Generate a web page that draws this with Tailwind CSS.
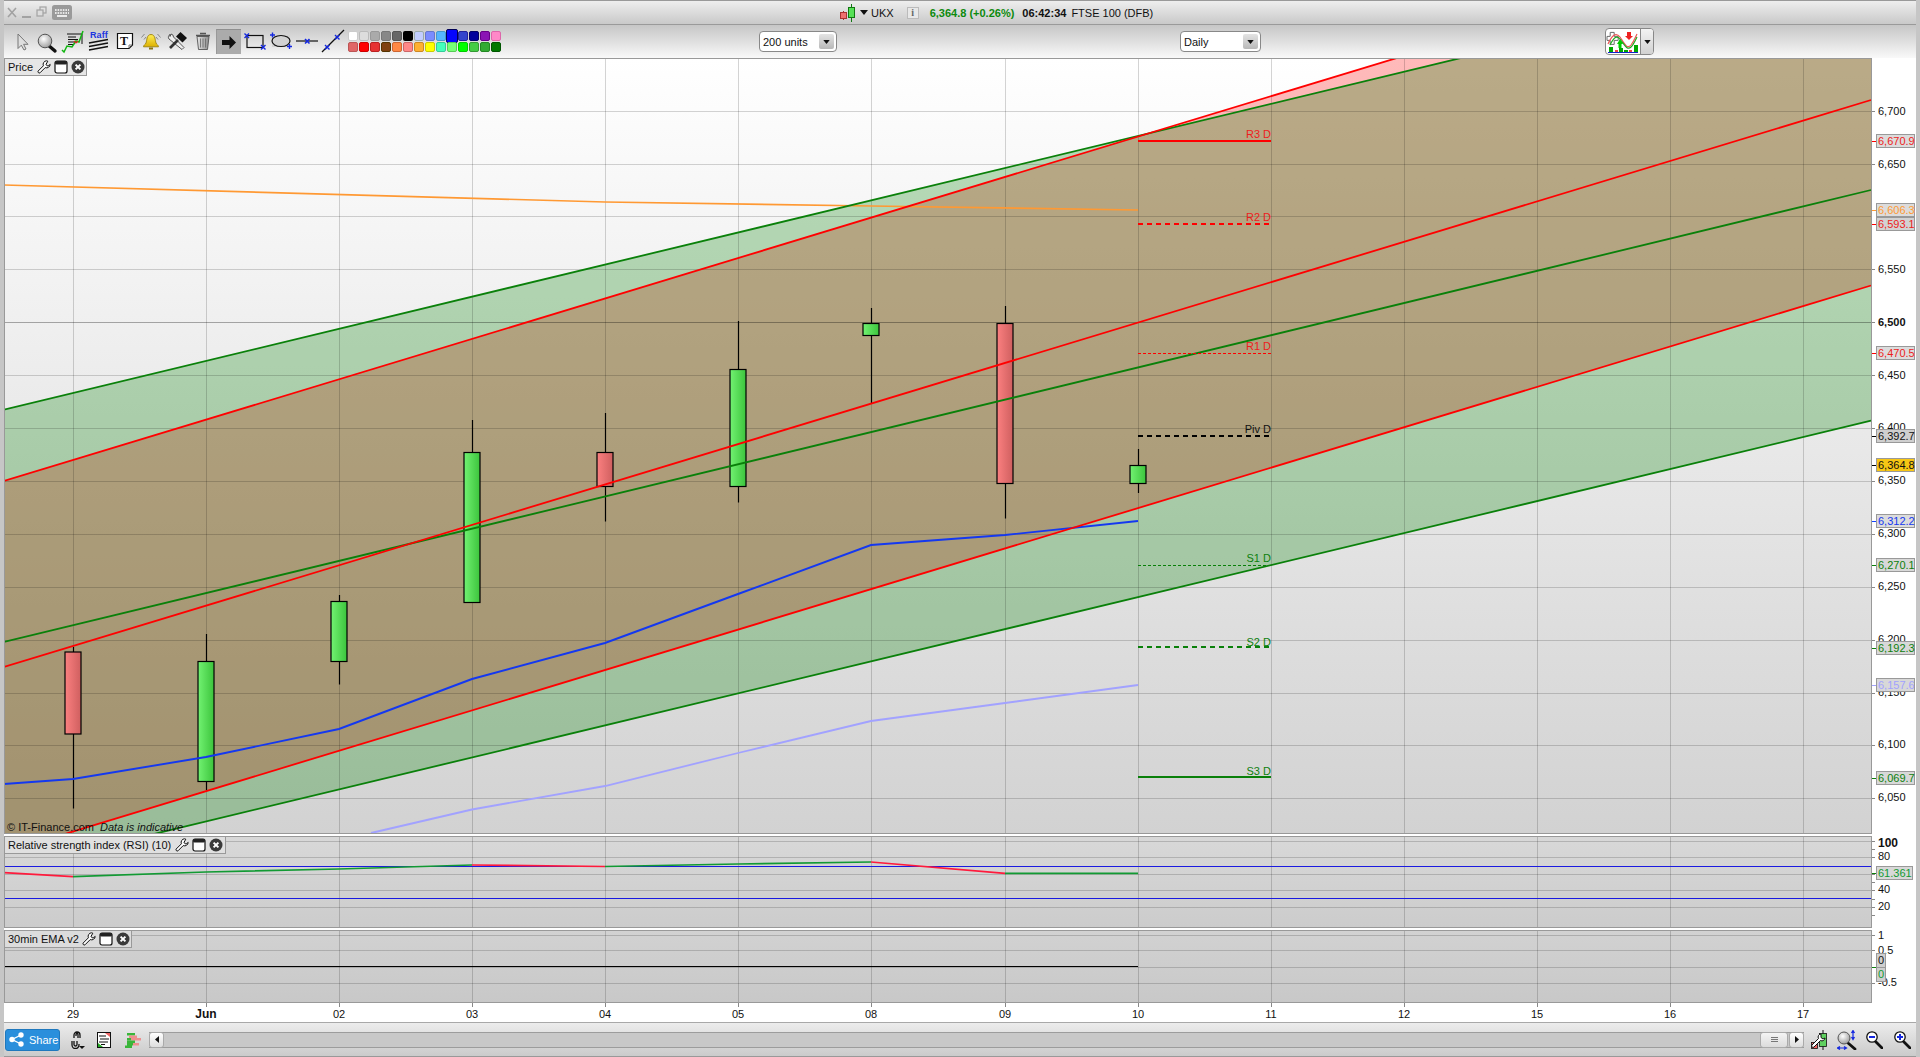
<!DOCTYPE html>
<html lang="en">
<head>
<meta charset="utf-8">
<title>UKX FTSE 100 (DFB)</title>
<script src="https://cdn.jsdelivr.net/npm/@tailwindcss/browser@4"></script>
</head>
<body class="w-[1920px] h-[1057px] overflow-hidden flex flex-col bg-white border-x-4 border-x-[#c6c6c6] text-[11px] leading-[14px] text-[#111] font-['Liberation_Sans',Arial,sans-serif]">

<svg class="absolute w-0 h-0" aria-hidden="true">
  <defs>
    <linearGradient id="gc" x1="0" x2="1" y1="0" y2="0"><stop offset="0" stop-color="#72f272"/><stop offset="1" stop-color="#3cc43c"/></linearGradient>
    <linearGradient id="rc" x1="0" x2="1" y1="0" y2="0"><stop offset="0" stop-color="#fb8080"/><stop offset="1" stop-color="#cf5f5f"/></linearGradient>
    <radialGradient id="glass" cx="0.4" cy="0.35" r="0.7"><stop offset="0" stop-color="#ffffff"/><stop offset="1" stop-color="#9a9a9a"/></radialGradient>
    <linearGradient id="bell" x1="0" x2="0" y1="0" y2="1"><stop offset="0" stop-color="#ffee55"/><stop offset="1" stop-color="#dcb000"/></linearGradient>
    <linearGradient id="trash" x1="0" x2="1" y1="0" y2="0"><stop offset="0" stop-color="#e6e6e6"/><stop offset="1" stop-color="#8a8a8a"/></linearGradient>
    <symbol id="wrench" viewBox="0 0 14 14"><path d="M9.6 .8A3.6 3.6 0 0 0 6.4 5.8L1.2 11A1.3 1.3 0 0 0 3 12.8L8.2 7.6A3.6 3.6 0 0 0 13.2 4.4L11 6.2L8.9 4.6L10.8 1.2Z" fill="#fff" stroke="#111" stroke-width="1"/></symbol>
    <symbol id="win" viewBox="0 0 14 14"><rect x="1" y="1" width="12" height="12" rx="2" fill="#fff" stroke="#111" stroke-width="1.2"/><rect x="1" y="1" width="12" height="3.5" rx="1.5" fill="#222"/></symbol>
    <symbol id="cls" viewBox="0 0 14 14"><circle cx="7" cy="7" r="6.5" fill="#3a3a3a"/><path d="M4.6 4.6L9.4 9.4M9.4 4.6L4.6 9.4" stroke="#fff" stroke-width="2"/></symbol>
    <symbol id="dd" viewBox="0 0 8 5"><path d="M0 0H8L4 5Z" fill="#111"/></symbol>
  </defs>
</svg>

<!-- title bar -->
<header class="h-[25px] shrink-0 flex items-center border-t border-t-[#999] border-b border-b-[#9a9a9a] bg-linear-to-b from-[#eeeeee] to-[#c9c9c9] whitespace-nowrap">
  <div class="w-[836px] shrink-0 flex items-center">
    <svg class="block shrink-0 ml-[3px]" width="44" height="16" viewBox="0 0 44 16" fill="none" stroke="#a2a2a2">
      <path d="M1 3L9 12M9 3L1 12" stroke-width="1.6"/>
      <path d="M15 12H24" stroke-width="2"/>
      <rect x="33" y="2" width="6" height="6" stroke-width="1.2"/>
      <rect x="30" y="5" width="6" height="6" fill="#ddd" stroke-width="1.2"/>
    </svg>
    <svg class="block shrink-0 ml-[1px]" width="20" height="15" viewBox="0 0 20 15">
      <rect width="20" height="15" rx="2.5" fill="#9a9a9a"/>
      <path d="M3 5H17M3 8H17" stroke="#fff" stroke-width="1.6" stroke-dasharray="1.6 1"/>
      <path d="M5 11H15" stroke="#fff" stroke-width="1.6"/>
    </svg>
  </div>
  <svg class="block shrink-0" width="16" height="18" viewBox="0 0 16 18">
    <path d="M3.5 7V16" stroke="#a33" stroke-width="1"/>
    <rect x=".5" y="8.5" width="6" height="6" fill="#f07070" stroke="#a33"/>
    <path d="M11.5 0V18" stroke="#171" stroke-width="1"/>
    <rect x="8.5" y="3.5" width="6" height="10" fill="#55e055" stroke="#171"/>
  </svg>
  <svg class="block shrink-0 ml-[4px]" width="8" height="5"><use href="#dd"/></svg>
  <span class="ml-[3px]">UKX</span>
  <span class="ml-[13px] w-[12px] h-[12px] flex items-center justify-center border border-[#bbb] bg-[#e8e8e8] text-[#666] font-['Liberation_Serif',serif] font-bold text-[10px]">i</span>
  <span class="ml-[11px] font-bold text-[#0d8a0d]">6,364.8 (+0.26%)</span>
  <span class="ml-[8px] font-bold">06:42:34</span>
  <span class="ml-[5px]">FTSE 100 (DFB)</span>
</header>

<!-- toolbar -->
<div class="h-[33px] shrink-0 flex items-center bg-linear-to-b from-[#c6c6c6] to-[#f9f9f9] pl-[4px]">
  <svg class="block shrink-0" width="26" height="33" viewBox="8 25 26 33"><path d="M18 34V48.5L21.3 45.2L24 50L26 49L23.6 44.3H28Z" fill="#dedede" stroke="#777"/></svg>
  <svg class="block shrink-0" width="26" height="33" viewBox="34 25 26 33"><path d="M48 45L55 51" stroke="#111" stroke-width="3.4" stroke-linecap="round"/><circle cx="45" cy="41" r="6.8" fill="url(#glass)" stroke="#555"/></svg>
  <svg class="block shrink-0" width="26" height="33" viewBox="60 25 26 33">
    <path d="M67 34H82V44" fill="none" stroke="#111"/>
    <path d="M68 37H76M68 39.5H78M68 42H75M68 44.5H74" stroke="#111" stroke-width="1.2"/>
    <path d="M62 50L64 52L67 46L72 47L76 41L79 42L83 31" fill="none" stroke="#11b511" stroke-width="1.5"/>
    <path d="M76 43l2-2M74 41l2 2" stroke="#e02222" stroke-width="1.2"/>
  </svg>
  <svg class="block shrink-0" width="26" height="33" viewBox="86 25 26 33">
    <text x="90" y="38" fill="#1b35e0" font-size="9" font-weight="700" letter-spacing=".1">Raff</text>
    <path d="M89 43L108 39.5M89 46.5L108 43M89 50L108 46.5" stroke="#111" stroke-width="1.6"/>
  </svg>
  <svg class="block shrink-0" width="26" height="33" viewBox="112 25 26 33">
    <path d="M117.500 33.500H132.500V45L129 48.500H117.500Z" fill="#fff" stroke="#111" stroke-width="1.200"/>
    <path d="M132 45L129 45V48" fill="none" stroke="#777"/>
    <text x="120" y="45" fill="#111" font-size="12" font-weight="700" font-family="Liberation Serif, serif">T</text>
  </svg>
  <svg class="block shrink-0" width="26" height="33" viewBox="138 25 26 33">
    <path d="M151 34.500C146.500 34.500 147 40.500 146 43C145.500 44.500 143.500 45 143.500 46.800H158.500C158.500 45 156.500 44.500 156 43C155 40.500 155.500 34.500 151 34.500Z" fill="url(#bell)" stroke="#9c8210" stroke-width=".9"/>
    <path d="M149 47.500H153V49.500H149Z" fill="#8a7410"/>
    <path d="M144.500 34L141.500 37.500M146 37L144 39.500M157.500 34L160.500 37.500M156 37L158 39.500" stroke="#888" stroke-width="1" fill="none"/>
  </svg>
  <svg class="block shrink-0" width="26" height="33" viewBox="164 25 26 33">
    <path d="M170 34.500A3 3 0 0 0 169 39L182 49.500L184 47.500L173.500 37A3 3 0 0 0 171 34L170 36.500Z" fill="#eee" stroke="#444" stroke-width=".9"/>
    <path d="M170 48L178 40" stroke="#333" stroke-width="2.600"/>
    <path d="M176 36.500L180.500 32L187 38L182.500 42.500Z" fill="#111"/>
  </svg>
  <svg class="block shrink-0" width="26" height="33" viewBox="190 25 26 33">
    <path d="M197 36.500H209L207.500 49.500H198.500Z" fill="url(#trash)" stroke="#555" stroke-width=".9"/>
    <path d="M196 35.500H210M200 33.500H206" stroke="#555" stroke-width="1.400"/>
    <path d="M200.500 38.500V47.500M203 38.500V47.500M205.500 38.500V47.500" stroke="#666" stroke-width=".8"/>
  </svg>
  <div class="w-[25px] h-[25px] shrink-0 flex items-center justify-center bg-[#ababab] border-t border-t-[#8f8f8f] border-l border-l-[#999]">
    <svg class="block" width="14" height="13" viewBox="0 0 14 13"><path d="M0 4H7.500V0L14 6.500L7.500 13V9H0Z" fill="#111"/></svg>
  </div>
  <svg class="block shrink-0 ml-[2px]" width="25" height="33" viewBox="243 25 25 33" fill="none">
    <rect x="247" y="35.500" width="16" height="12" stroke="#111" stroke-width="1.200"/>
    <path d="M244.500 33.500L249 38M249 33.500L244.500 38M261 45L265.500 49.500M265.500 45L261 49.500" stroke="#1428e0" stroke-width="1.400"/>
  </svg>
  <svg class="block shrink-0 ml-[1px]" width="25" height="33" viewBox="269 25 25 33" fill="none">
    <rect x="272" y="35" width="18" height="12" fill="#d2d2d2"/>
    <ellipse cx="281" cy="41" rx="9" ry="5.500" stroke="#111" stroke-width="1.200"/>
    <path d="M272.500 32.500V37.500M270 35H275M289.500 44V49M287 46.500H292" stroke="#1428e0" stroke-width="1.400"/>
  </svg>
  <svg class="block shrink-0 ml-[1px]" width="25" height="33" viewBox="295 25 25 33" fill="none">
    <path d="M296 41H318" stroke="#111" stroke-width="1.200"/>
    <path d="M305 39L309.500 43.500M309.500 39L305 43.500" stroke="#1428e0" stroke-width="1.600"/>
  </svg>
  <svg class="block shrink-0" width="26" height="33" viewBox="320 25 26 33" fill="none">
    <path d="M322 52L344 30" stroke="#111" stroke-width="1.200"/>
    <path d="M325 45L329.500 49.500M329.500 45L325 49.500M335 35L339.500 39.500M339.500 35L335 39.500" stroke="#1428e0" stroke-width="1.400"/>
  </svg>
  <div class="ml-[2px] shrink-0 grid grid-cols-[repeat(14,10px)] grid-rows-[10px_10px] gap-px">
    <span class="rounded-[2px] bg-white border border-[#ccc]"></span>
    <span class="rounded-[2px] bg-[#dddddd] border border-[#bbb]"></span>
    <span class="rounded-[2px] bg-[#aaaaaa] border border-[#999]"></span>
    <span class="rounded-[2px] bg-[#888888] border border-[#777]"></span>
    <span class="rounded-[2px] bg-[#666666] border border-[#555]"></span>
    <span class="rounded-[2px] bg-black"></span>
    <span class="rounded-[2px] bg-[#c2ceff] border border-[#9aa]"></span>
    <span class="rounded-[2px] bg-[#7a8cff] border border-[#67c]"></span>
    <span class="rounded-[2px] bg-[#55b5ff] border border-[#49c]"></span>
    <span class="rounded-[2px] bg-[#0505ff] -mx-[1px] -my-[2px] border border-[#005]"></span>
    <span class="rounded-[2px] bg-[#3344cc] border border-[#229]"></span>
    <span class="rounded-[2px] bg-[#00009c] border border-[#006]"></span>
    <span class="rounded-[2px] bg-[#8a14b4] border border-[#608]"></span>
    <span class="rounded-[2px] bg-[#ff88c8] border border-[#d6a]"></span>
    <span class="rounded-[2px] bg-[#e06666] border border-[#b55]"></span>
    <span class="rounded-[2px] bg-[#ff0000] border border-[#c00]"></span>
    <span class="rounded-[2px] bg-[#e63333] border border-[#b22]"></span>
    <span class="rounded-[2px] bg-[#804010] border border-[#530]"></span>
    <span class="rounded-[2px] bg-[#ff8844] border border-[#c63]"></span>
    <span class="rounded-[2px] bg-[#ff8888] border border-[#c66]"></span>
    <span class="rounded-[2px] bg-[#ffb030] border border-[#c82]"></span>
    <span class="rounded-[2px] bg-[#ffff00] border border-[#cc0]"></span>
    <span class="rounded-[2px] bg-[#44ffbb] border border-[#3c9]"></span>
    <span class="rounded-[2px] bg-[#77ff77] border border-[#5c5]"></span>
    <span class="rounded-[2px] bg-[#00ff00] border border-[#0c0]"></span>
    <span class="rounded-[2px] bg-[#44cc44] border border-[#393]"></span>
    <span class="rounded-[2px] bg-[#33aa33] border border-[#282]"></span>
    <span class="rounded-[2px] bg-[#007700] border border-[#050]"></span>
  </div>
  <div class="ml-[258px] w-[78px] h-[21px] shrink-0 flex items-center justify-between pl-[3px] pr-[2px] rounded-[4px] border border-[#888] bg-white">
    <span>200 units</span>
    <span class="w-[15px] h-[15px] flex items-center justify-center rounded-[2px] bg-linear-to-b from-[#e4e4e4] to-[#b8b8b8]"><svg class="block" width="7" height="4"><use href="#dd"/></svg></span>
  </div>
  <div class="ml-[343px] w-[81px] h-[21px] shrink-0 flex items-center justify-between pl-[3px] pr-[2px] rounded-[4px] border border-[#888] bg-white">
    <span>Daily</span>
    <span class="w-[15px] h-[15px] flex items-center justify-center rounded-[2px] bg-linear-to-b from-[#e4e4e4] to-[#b8b8b8]"><svg class="block" width="7" height="4"><use href="#dd"/></svg></span>
  </div>
  <div class="ml-[344px] w-[49px] h-[27px] shrink-0 flex items-center rounded-[4px] border border-[#888] bg-white overflow-hidden">
    <svg class="block shrink-0" width="34" height="25" viewBox="0 0 34 25" fill="none">
      <path d="M4 8V3H9V8H14V13H9V18H4V13H0V8Z" transform="translate(1 1) scale(.8)" fill="#fff" stroke="#666" stroke-width="1.200"/>
      <path d="M2 15C6 6 10 3 14 8C18 14 21 21 25 16C28 12 29 9 31 5" stroke="#e55" stroke-width="1.200"/>
      <path d="M4 16C8 8 11 6 14 10C18 15 21 22 25 18C28 15 30 10 31 8" stroke="#2a2" stroke-width="1.200"/>
      <path d="M11 15H17L14 10Z M12.500 15H15.500V19H12.500Z" fill="#0c0"/>
      <path d="M21 3H25V7H27L23 11L19 7H21Z" fill="#e22"/>
      <path d="M3 18H7V23H3ZM13 19H17V23H13ZM28 16H32V23H28Z" fill="#0a0"/>
      <path d="M9 21H12V23H9ZM23 21H26V23H23Z" fill="#e44"/>
      <path d="M18 21H22V23H18Z" fill="#0a0"/>
      <path d="M2 23.500H32" stroke="#12c" stroke-width="1"/>
    </svg>
    <span class="w-[13px] h-[27px] shrink-0 flex items-center justify-center border-l border-l-[#888] bg-linear-to-b from-[#f4f4f4] to-[#d0d0d0]"><svg class="block" width="7" height="4"><use href="#dd"/></svg></span>
  </div>
</div>

<!-- price panel -->
<section class="relative h-[776px] shrink-0">
  <div class="w-[1868px] h-full bg-linear-to-b from-white to-[#d2d2d2]"></div>
  <svg class="absolute inset-0" width="1912" height="776" viewBox="4 58 1912 776" fill="none">
    <polygon points="4,481 1871,-86 1871,285.5 4,852.5" fill="#ff0000" fill-opacity=".27"/>
    <polygon points="4,409.7 1871,-41 1871,420.7 4,870.1" fill="#008000" fill-opacity=".27"/>
    <g stroke="#000" stroke-opacity=".17">
      <path d="M4 111.500H1872M4 164.500H1872M4 216.500H1872M4 269.500H1872M4 375.500H1872M4 428.500H1872M4 481.500H1872M4 534.500H1872M4 587.500H1872M4 640.500H1872M4 693.500H1872M4 745.500H1872M4 798.500H1872"/>
      <path d="M73.500 58V834M206.500 58V834M339.500 58V834M472.500 58V834M605.500 58V834M738.500 58V834M871.500 58V834M1005.500 58V834M1138.500 58V834M1271.500 58V834M1404.500 58V834M1537.500 58V834M1670.500 58V834M1803.500 58V834"/>
    </g>
    <path d="M4 322.500H1872" stroke="#000" stroke-opacity=".32"/>
    <!-- candles -->
    <g stroke="#000" stroke-width="1.200">
      <path d="M73.500 647V808.500M206.500 634V790M339.500 595V684.500M472.500 420V602M605.500 413V521.500M738.500 321V502.500M871.500 308V403M1005.500 306V518.500M1138.500 449V493"/>
      <rect x="65" y="652" width="16" height="82" fill="url(#rc)"/>
      <rect x="198" y="661.500" width="16" height="120" fill="url(#gc)"/>
      <rect x="331" y="601.500" width="16" height="60" fill="url(#gc)"/>
      <rect x="464" y="452.500" width="16" height="150" fill="url(#gc)"/>
      <rect x="597" y="452.500" width="16" height="34" fill="url(#rc)"/>
      <rect x="730" y="369.500" width="16" height="117" fill="url(#gc)"/>
      <rect x="863" y="323.500" width="16" height="12" fill="url(#gc)"/>
      <rect x="997" y="323.500" width="16" height="160" fill="url(#rc)"/>
      <rect x="1130" y="465.500" width="16" height="18" fill="url(#gc)"/>
    </g>
    <!-- moving averages -->
    <polyline points="4,185 605,202 871,206 1138,210" stroke="#ff9933" stroke-width="1.700"/>
    <polyline points="371,833 472,809.500 605,786 738,753 871,721 1005,703 1138,685" stroke="#a2a2ff" stroke-width="1.800"/>
    <polyline points="4,784 73,779 206,757 339,729 472,679 605,643 738,594 871,545 1005,535 1138,521" stroke="#1438f0" stroke-width="1.900"/>
    <!-- channels -->
    <g stroke="#0a800a" stroke-width="1.800">
      <path d="M4 409.700L1871 -41"/>
      <path d="M4 642L1871 190"/>
      <path d="M4 870.100L1871 420.700"/>
    </g>
    <g stroke="#ff0000" stroke-width="1.800">
      <path d="M4 481L1871 -86"/>
      <path d="M4 667L1871 100"/>
      <path d="M4 852.500L1871 285.500"/>
    </g>
    <!-- pivots -->
    <path d="M1138 141H1271" stroke="#f00" stroke-width="1.800"/>
    <path d="M1138 224H1271" stroke="#f00" stroke-width="1.800" stroke-dasharray="5 4"/>
    <path d="M1138 353.500H1271" stroke="#f00" stroke-width="1" stroke-dasharray="3 2"/>
    <path d="M1138 436H1271" stroke="#000" stroke-width="1.800" stroke-dasharray="5 4"/>
    <path d="M1138 565.500H1271" stroke="#0a800a" stroke-width="1" stroke-dasharray="3 2"/>
    <path d="M1138 647H1271" stroke="#0a800a" stroke-width="1.800" stroke-dasharray="5 4"/>
    <path d="M1138 777H1271" stroke="#0a800a" stroke-width="1.800"/>
    <!-- frame + ticks -->
    <rect x="4.500" y="58.500" width="1867" height="775" stroke="#999"/>
    <path d="M1872 111.500H1875M1872 164.500H1875M1872 269.500H1875M1872 322.500H1875M1872 375.500H1875M1872 428.500H1875M1872 481.500H1875M1872 534.500H1875M1872 587.500H1875M1872 640.500H1875M1872 693.500H1875M1872 745.500H1875M1872 798.500H1875" stroke="#888"/>
    <path d="M1872 141.500H1876M1872 224.500H1876M1872 353.500H1876" stroke="#f00"/>
    <path d="M1872 210.500H1876" stroke="#f93"/>
    <path d="M1872 436.500H1876M1872 465.500H1876" stroke="#000"/>
    <path d="M1872 521.500H1876" stroke="#14f"/>
    <path d="M1872 565.500H1876M1872 648.500H1876M1872 778.500H1876" stroke="#0a800a"/>
    <path d="M1872 685.500H1876" stroke="#a2a2ff"/>
  </svg>

  <div class="absolute left-0 top-0 h-[18px] w-[83px] flex items-center pl-[3px] bg-[#e6e6e6] border border-[#999]">
    <span class="w-[29px]">Price</span>
    <svg class="block" width="14" height="14"><use href="#wrench"/></svg>
    <svg class="block ml-[3px]" width="14" height="14"><use href="#win"/></svg>
    <svg class="block ml-[3px]" width="14" height="14"><use href="#cls"/></svg>
  </div>

  <span class="absolute right-[645px] top-[69px] text-[#ee1c1c]">R3 D</span>
  <span class="absolute right-[645px] top-[152px] text-[#ee1c1c]">R2 D</span>
  <span class="absolute right-[645px] top-[281px] text-[#ee1c1c]">R1 D</span>
  <span class="absolute right-[645px] top-[364px] text-[#111]">Piv D</span>
  <span class="absolute right-[645px] top-[493px] text-[#0d800d]">S1 D</span>
  <span class="absolute right-[645px] top-[577px] text-[#0d800d]">S2 D</span>
  <span class="absolute right-[645px] top-[706px] text-[#0d800d]">S3 D</span>

  <div class="absolute left-[3px] top-[762px] whitespace-nowrap">© IT-Finance.com <i class="ml-[3px]">Data is indicative</i></div>

  <span class="absolute left-[1874px] top-[46px]">6,700</span>
  <span class="absolute left-[1874px] top-[99px]">6,650</span>
  <span class="absolute left-[1874px] top-[204px]">6,550</span>
  <span class="absolute left-[1874px] top-[257px] font-bold">6,500</span>
  <span class="absolute left-[1874px] top-[310px]">6,450</span>
  <span class="absolute left-[1874px] top-[362px]">6,400</span>
  <span class="absolute left-[1874px] top-[415px]">6,350</span>
  <span class="absolute left-[1874px] top-[468px]">6,300</span>
  <span class="absolute left-[1874px] top-[521px]">6,250</span>
  <span class="absolute left-[1874px] top-[574px]">6,200</span>
  <span class="absolute left-[1874px] top-[627px]">6,150</span>
  <span class="absolute left-[1874px] top-[679px]">6,100</span>
  <span class="absolute left-[1874px] top-[732px]">6,050</span>

  <span class="absolute left-[1872px] top-[76px] w-[39px] h-[14px] pl-[1px] leading-[12px] border border-[#999] bg-[#dcdcdc] text-[#ee1c1c]">6,670.9</span>
  <span class="absolute left-[1872px] top-[145px] w-[39px] h-[14px] pl-[1px] leading-[12px] border border-[#999] bg-[#dcdcdc] text-[#ff9a33]">6,606.3</span>
  <span class="absolute left-[1872px] top-[159px] w-[39px] h-[14px] pl-[1px] leading-[12px] border border-[#999] bg-[#d2d2d2] text-[#ee1c1c]">6,593.1</span>
  <span class="absolute left-[1872px] top-[288px] w-[39px] h-[14px] pl-[1px] leading-[12px] border border-[#999] bg-[#dcdcdc] text-[#ee1c1c]">6,470.5</span>
  <span class="absolute left-[1872px] top-[371px] w-[39px] h-[14px] pl-[1px] leading-[12px] border border-[#999] bg-[#cfcfcf] text-[#111]">6,392.7</span>
  <span class="absolute left-[1872px] top-[400px] w-[39px] h-[14px] pl-[1px] leading-[12px] border border-[#999] bg-[#f7c614] text-[#111]">6,364.8</span>
  <span class="absolute left-[1872px] top-[456px] w-[39px] h-[14px] pl-[1px] leading-[12px] border border-[#999] bg-[#dcdcdc] text-[#1438f0]">6,312.2</span>
  <span class="absolute left-[1872px] top-[500px] w-[39px] h-[14px] pl-[1px] leading-[12px] border border-[#999] bg-[#d8d8d8] text-[#0d800d]">6,270.1</span>
  <span class="absolute left-[1872px] top-[583px] w-[39px] h-[14px] pl-[1px] leading-[12px] border border-[#999] bg-[#d8d8d8] text-[#0d800d]">6,192.3</span>
  <span class="absolute left-[1872px] top-[620px] w-[39px] h-[14px] pl-[1px] leading-[12px] border border-[#999] bg-[#d8d8d8] text-[#a2a2ff]">6,157.6</span>
  <span class="absolute left-[1872px] top-[713px] w-[39px] h-[14px] pl-[1px] leading-[12px] border border-[#999] bg-[#d8d8d8] text-[#0d800d]">6,069.7</span>
</section>

<div class="h-[2px] shrink-0"></div>

<!-- RSI panel -->
<section class="relative h-[92px] shrink-0">
  <div class="w-[1868px] h-full bg-linear-to-b from-[#d8d8d8] to-[#cccccc]"></div>
  <svg class="absolute inset-0" width="1912" height="92" viewBox="4 836 1912 92" fill="none">
    <path d="M4 841.500H1872M4 857.500H1872M4 874.500H1872M4 890.500H1872M4 907.500H1872" stroke="#000" stroke-opacity=".17"/>
    <path d="M73.500 836V928M206.500 836V928M339.500 836V928M472.500 836V928M605.500 836V928M738.500 836V928M871.500 836V928M1005.500 836V928M1138.500 836V928M1271.500 836V928M1404.500 836V928M1537.500 836V928M1670.500 836V928M1803.500 836V928" stroke="#000" stroke-opacity=".17"/>
    <path d="M4 866.500H1872M4 898.500H1872" stroke="#1a1ae0"/>
    <polyline points="4,872.700 73,876.700" stroke="#ff1a3c" stroke-width="1.700"/>
    <polyline points="73,876.700 206,872 339,869 472,865" stroke="#119a33" stroke-width="1.700"/>
    <polyline points="472,865 605,866.500" stroke="#ff1a3c" stroke-width="1.700"/>
    <polyline points="605,866.500 738,864 871,862" stroke="#119a33" stroke-width="1.700"/>
    <polyline points="871,862 1005,873.300" stroke="#ff1a3c" stroke-width="1.700"/>
    <polyline points="1005,873.300 1138,873.300" stroke="#119a33" stroke-width="1.700"/>
    <rect x="4.500" y="836.500" width="1867" height="91" stroke="#999"/>
    <path d="M1872 841.500H1875M1872 849.500H1875M1872 857.500H1875M1872 874.500H1875M1872 882.500H1875M1872 890.500H1875M1872 899.500H1875M1872 907.500H1875M1872 915.500H1875" stroke="#888"/>
    <path d="M1872 873.500H1876" stroke="#0a800a"/>
  </svg>
  <div class="absolute left-0 top-0 h-[18px] w-[222px] flex items-center pl-[3px] bg-[#e0e0e0] border border-[#999] whitespace-nowrap">
    <span class="w-[167px]">Relative strength index (RSI) (10)</span>
    <svg class="block" width="14" height="14"><use href="#wrench"/></svg>
    <svg class="block ml-[3px]" width="14" height="14"><use href="#win"/></svg>
    <svg class="block ml-[3px]" width="14" height="14"><use href="#cls"/></svg>
  </div>
  <span class="absolute left-[1874px] top-[0px] font-bold text-[12px]">100</span>
  <span class="absolute left-[1874px] top-[13px]">80</span>
  <span class="absolute left-[1874px] top-[46px]">40</span>
  <span class="absolute left-[1874px] top-[63px]">20</span>
  <span class="absolute left-[1872px] top-[30px] w-[37px] h-[14px] pl-[1px] leading-[12px] border border-[#999] bg-[#d8d8d8] text-[#119a33]">61.361</span>
</section>

<div class="h-[2px] shrink-0"></div>

<!-- EMA panel -->
<section class="relative h-[73px] shrink-0">
  <div class="w-[1868px] h-full bg-linear-to-b from-[#d2d2d2] to-[#c8c8c8]"></div>
  <svg class="absolute inset-0" width="1912" height="73" viewBox="4 930 1912 73" fill="none">
    <path d="M4 935.500H1872M4 950.500H1872M4 967.500H1872M4 983.500H1872" stroke="#000" stroke-opacity=".17"/>
    <path d="M73.500 930V1003M206.500 930V1003M339.500 930V1003M472.500 930V1003M605.500 930V1003M738.500 930V1003M871.500 930V1003M1005.500 930V1003M1138.500 930V1003M1271.500 930V1003M1404.500 930V1003M1537.500 930V1003M1670.500 930V1003M1803.500 930V1003" stroke="#000" stroke-opacity=".17"/>
    <path d="M4 966.500H1138" stroke="#000" stroke-width="1.200"/>
    <rect x="4.500" y="930.500" width="1867" height="72" stroke="#999"/>
    <path d="M1872 935.500H1875M1872 950.500H1875M1872 983.500H1875" stroke="#888"/>
    <path d="M1872 967.500H1876" stroke="#0a800a"/>
  </svg>
  <div class="absolute left-0 top-0 h-[18px] w-[128px] flex items-center pl-[3px] bg-[#dcdcdc] border border-[#999] whitespace-nowrap">
    <span class="w-[74px]">30min EMA v2</span>
    <svg class="block" width="14" height="14"><use href="#wrench"/></svg>
    <svg class="block ml-[3px]" width="14" height="14"><use href="#win"/></svg>
    <svg class="block ml-[3px]" width="14" height="14"><use href="#cls"/></svg>
  </div>
  <span class="absolute left-[1874px] top-[-2px]">1</span>
  <span class="absolute left-[1874px] top-[13px]">0.5</span>
  <span class="absolute left-[1874px] top-[45px]">-0.5</span>
  <span class="absolute left-[1872px] top-[23px] w-[10px] h-[15px] pl-[1px] leading-[13px] border border-[#999] bg-[#cfcfcf]">0</span>
  <span class="absolute left-[1872px] top-[37px] w-[10px] h-[15px] pl-[1px] leading-[13px] border border-[#999] bg-[#cfcfcf] text-[#119a33]">0</span>
</section>

<!-- time axis -->
<div class="relative h-[19px] shrink-0">
  <svg class="absolute inset-0" width="1912" height="19" viewBox="4 1003 1912 19" fill="none"><path d="M73.500 1003V1007M206.500 1003V1007M339.500 1003V1007M472.500 1003V1007M605.500 1003V1007M738.500 1003V1007M871.500 1003V1007M1005.500 1003V1007M1138.500 1003V1007M1271.500 1003V1007M1404.500 1003V1007M1537.500 1003V1007M1670.500 1003V1007M1803.500 1003V1007" stroke="#888"/></svg>
  <span class="absolute left-[69px] top-[4px] -translate-x-1/2">29</span>
  <span class="absolute left-[202px] top-[4px] -translate-x-1/2 font-bold text-[12px]">Jun</span>
  <span class="absolute left-[335px] top-[4px] -translate-x-1/2">02</span>
  <span class="absolute left-[468px] top-[4px] -translate-x-1/2">03</span>
  <span class="absolute left-[601px] top-[4px] -translate-x-1/2">04</span>
  <span class="absolute left-[734px] top-[4px] -translate-x-1/2">05</span>
  <span class="absolute left-[867px] top-[4px] -translate-x-1/2">08</span>
  <span class="absolute left-[1001px] top-[4px] -translate-x-1/2">09</span>
  <span class="absolute left-[1134px] top-[4px] -translate-x-1/2">10</span>
  <span class="absolute left-[1267px] top-[4px] -translate-x-1/2">11</span>
  <span class="absolute left-[1400px] top-[4px] -translate-x-1/2">12</span>
  <span class="absolute left-[1533px] top-[4px] -translate-x-1/2">15</span>
  <span class="absolute left-[1666px] top-[4px] -translate-x-1/2">16</span>
  <span class="absolute left-[1799px] top-[4px] -translate-x-1/2">17</span>
</div>

<!-- footer -->
<footer class="h-[35px] shrink-0 flex items-center border-t border-t-[#a8a8a8] border-b border-b-[#999] bg-linear-to-b from-[#ececec] to-[#cbcbcb]">
  <div class="ml-[1px] w-[55px] h-[22px] shrink-0 flex items-center gap-[5px] pl-[3px] rounded-[3px] bg-[#2a8fdc] border border-[#1f78bd] text-white">
    <svg class="block shrink-0" width="15" height="15" viewBox="0 0 15 15" fill="#fff"><circle cx="12" cy="3" r="2.700"/><circle cx="3" cy="7.500" r="2.700"/><circle cx="12" cy="12" r="2.700"/><path d="M12 3L3 7.500L12 12" fill="none" stroke="#fff" stroke-width="1.300"/></svg>
    <span>Share</span>
  </div>
  <svg class="block shrink-0 ml-[11px]" width="15" height="18" viewBox="0 0 15 18" fill="none" stroke="#111" stroke-width="1.300">
    <path d="M3 7V4A3 3 0 0 1 9 4V7M5 5V3.500A1 1 0 0 1 7 3.500V7"/>
    <path d="M1 10V14A3.500 3.500 0 0 0 8 14V13M3 10V13.500A1.500 1.500 0 0 0 6 13.500V10"/>
    <path d="M8 15H14L11 18Z" fill="#111" stroke="none"/>
  </svg>
  <svg class="block shrink-0 ml-[11px]" width="14" height="16" viewBox="0 0 14 16" fill="none">
    <rect x=".5" y=".5" width="13" height="15" fill="#fff" stroke="#111"/>
    <path d="M2 4H9M3 7H12M2 10H11M4 12.500H8" stroke="#111" stroke-width="1.200"/>
    <path d="M8 1H13V5Z" fill="#e66"/>
    <path d="M1 15V11L6 15Z" fill="#2a2"/>
  </svg>
  <svg class="block shrink-0 ml-[14px]" width="16" height="16" viewBox="0 0 16 16">
    <path d="M2 1H10V3.500H2ZM2 6H6V8.500H2ZM2 11H8V13.500H2ZM0 13.500H7V16H0Z" fill="#3ab53a"/>
    <path d="M6 6H16V8.500H6ZM8 11H14V13.500H8ZM4 3.500H12V6H4Z" fill="#ee8f8f"/>
    <path d="M2 8.500H10V11H2Z" fill="#3ab53a"/>
  </svg>
  <div class="ml-[8px] w-[1655px] h-[16px] shrink-0 flex items-center bg-[#c8c8c8] border-y border-y-[#9c9c9c]">
    <span class="w-[15px] h-[16px] shrink-0 flex items-center justify-center rounded-[3px] bg-linear-to-b from-white to-[#dddddd] border border-[#aaa]"><svg class="block" width="4" height="7" viewBox="0 0 4 7"><path d="M4 0V7L0 3.500Z" fill="#111"/></svg></span>
    <span class="flex-1"></span>
    <span class="w-[28px] h-[16px] shrink-0 flex flex-col items-center justify-center gap-[1px] rounded-[3px] bg-linear-to-b from-[#f4f4f4] to-[#dcdcdc] border border-[#aaa]">
      <span class="w-[7px] h-px bg-[#777]"></span><span class="w-[7px] h-px bg-[#777]"></span><span class="w-[7px] h-px bg-[#777]"></span>
    </span>
    <span class="ml-[1px] w-[15px] h-[16px] shrink-0 flex items-center justify-center rounded-[3px] bg-linear-to-b from-white to-[#dddddd] border border-[#aaa]"><svg class="block" width="4" height="7" viewBox="0 0 4 7"><path d="M0 0V7L4 3.500Z" fill="#111"/></svg></span>
  </div>
  <svg class="block shrink-0 ml-[7px]" width="16" height="20" viewBox="0 0 16 20" fill="none">
    <path d="M12 0V20" stroke="#111"/>
    <rect x="8.500" y="3.500" width="7" height="13" fill="#5fd05f" stroke="#111" stroke-width=".8"/>
    <rect x=".5" y="12.500" width="6" height="6" fill="#e66" stroke="#111" stroke-width=".8"/>
    <path d="M10 4A3 3 0 0 0 7.500 8.500L1 15A1.300 1.300 0 0 0 3 17L9.500 10.500A3 3 0 0 0 14 8L12 9L10 7.500Z" fill="#fff" stroke="#111" stroke-width="1"/>
  </svg>
  <svg class="block shrink-0 ml-[10px]" width="22" height="20" viewBox="0 0 22 20" fill="none">
    <path d="M11 13L18 19" stroke="#111" stroke-width="2.800" stroke-linecap="round"/>
    <circle cx="7" cy="8" r="6" fill="url(#glass)" stroke="#555"/>
    <path d="M16 1V9M14.500 3L16 .5L17.500 3M14.500 7L16 9.500L17.500 7M1 18H9M3 16.500L.5 18L3 19.500M7 16.500L9.500 18L7 19.500" stroke="#1428e0" stroke-width="1.200"/>
  </svg>
  <svg class="block shrink-0 ml-[7px]" width="17" height="18" viewBox="0 0 17 18" fill="none">
    <path d="M10 11L16 17" stroke="#111" stroke-width="2.800" stroke-linecap="round"/>
    <circle cx="6" cy="6" r="5.200" fill="#fff" stroke="#111" stroke-width="1.300"/>
    <path d="M3 6H9" stroke="#1428e0" stroke-width="2"/>
  </svg>
  <svg class="block shrink-0 ml-[11px]" width="17" height="18" viewBox="0 0 17 18" fill="none">
    <path d="M10 11L16 17" stroke="#111" stroke-width="2.800" stroke-linecap="round"/>
    <circle cx="6" cy="6" r="5.200" fill="#fff" stroke="#111" stroke-width="1.300"/>
    <path d="M3 6H9M6 3V9" stroke="#1428e0" stroke-width="2"/>
  </svg>
</footer>
</body>
</html>
